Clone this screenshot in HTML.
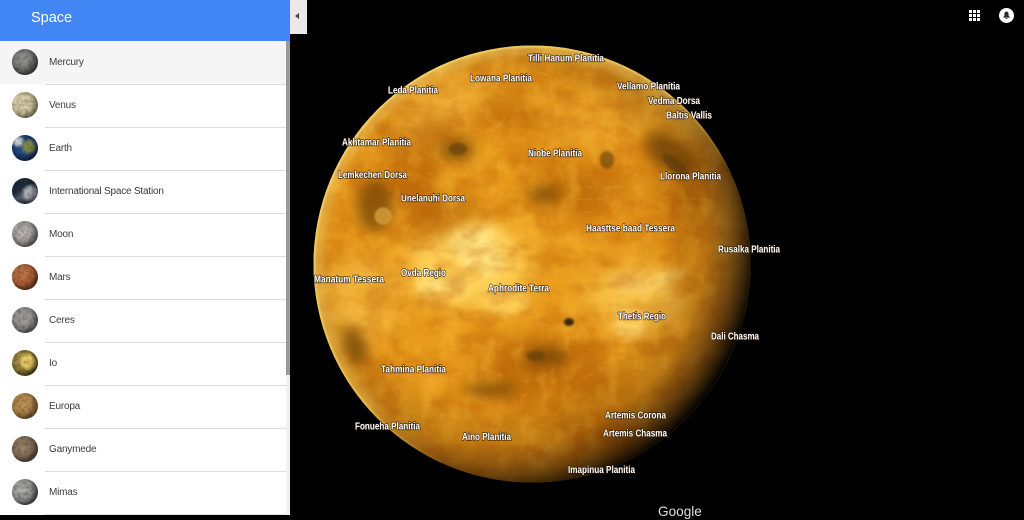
<!DOCTYPE html>
<html><head><meta charset="utf-8"><style>
html,body{margin:0;padding:0;width:1024px;height:515px;overflow:hidden;background:#000;font-family:"Liberation Sans",sans-serif}
#map{position:absolute;left:0;top:0}
#side{position:absolute;left:0;top:0;width:290px;height:515px;background:#fff;overflow:hidden}
#hd{position:absolute;left:0;top:0;width:290px;height:41px;background:#4285f4;color:#fff;font-size:14.5px;line-height:36px;text-indent:31px}
.r{position:absolute;left:0;width:286px;height:43px}
.r b{position:absolute;left:45px;right:0;bottom:-1px;height:1px;background:#dcdcdc}
.r span{position:absolute;left:49px;top:0;line-height:43px;font-size:10px;color:#3c3c3c;letter-spacing:-.2px;white-space:nowrap}
.r i{position:absolute;left:11.5px;top:8px;width:26px;height:26px;border-radius:50%;display:block;box-shadow:inset -3px -3px 5px rgba(0,0,0,.45)}
#av{position:absolute;left:0;top:0}
#track{position:absolute;left:286px;top:41px;width:4px;height:474px;background:#f1f1f1}
#thumb{position:absolute;left:286px;top:41px;width:4px;height:334px;background:#9a9a9a}
#tg{position:absolute;left:290px;top:0;width:17px;height:34px;background:#e9e9e9}
#tg:after{content:"";position:absolute;left:5px;top:13px;border:3.5px solid transparent;border-right:4px solid #444;border-left:0}
#goog{position:absolute;left:658px;top:502.5px;font-size:13.6px;line-height:17px;color:#ddd}
</style></head><body>
<svg id="map" width="1024" height="515" viewBox="0 0 1024 515">
<defs>
<radialGradient id="base" gradientUnits="userSpaceOnUse" cx="490" cy="270" r="250">
<stop offset="0" stop-color="#f0a722"/><stop offset=".55" stop-color="#e3951a"/><stop offset=".85" stop-color="#da8e1a"/><stop offset="1" stop-color="#e6a832"/>
</radialGradient>
<radialGradient id="shade" gradientUnits="userSpaceOnUse" cx="497" cy="238" r="268">
<stop offset=".62" stop-color="#000" stop-opacity="0"/><stop offset=".78" stop-color="#2a1000" stop-opacity=".18"/><stop offset=".88" stop-color="#1a0800" stop-opacity=".55"/><stop offset=".97" stop-color="#000" stop-opacity=".96"/><stop offset="1" stop-color="#000"/>
</radialGradient>
<linearGradient id="rim" gradientUnits="userSpaceOnUse" x1="340" y1="110" x2="660" y2="420">
<stop offset="0" stop-color="#ffe888"/><stop offset=".5" stop-color="#f6d060"/><stop offset=".72" stop-color="#f0b848" stop-opacity="0"/>
</linearGradient>
<clipPath id="disc"><circle cx="532" cy="264" r="218.5"/></clipPath>
<clipPath id="avc"><circle cx="24.500" cy="62" r="13"/><circle cx="24.500" cy="105" r="13"/><circle cx="24.500" cy="148" r="13"/><circle cx="24.500" cy="191" r="13"/><circle cx="24.500" cy="234" r="13"/><circle cx="24.500" cy="277" r="13"/><circle cx="24.500" cy="320" r="13"/><circle cx="24.500" cy="363" r="13"/><circle cx="24.500" cy="406" r="13"/><circle cx="24.500" cy="449" r="13"/><circle cx="24.500" cy="492" r="13"/></clipPath>
<filter id="b3" x="-50%" y="-50%" width="200%" height="200%" color-interpolation-filters="sRGB"><feGaussianBlur stdDeviation="5"/></filter>
<filter id="b6" x="-50%" y="-50%" width="200%" height="200%" color-interpolation-filters="sRGB"><feGaussianBlur stdDeviation="6"/></filter>
<filter id="b12" x="-50%" y="-50%" width="200%" height="200%" color-interpolation-filters="sRGB"><feGaussianBlur stdDeviation="12"/></filter>
<filter id="b1" x="-50%" y="-50%" width="200%" height="200%" color-interpolation-filters="sRGB"><feGaussianBlur stdDeviation="1"/></filter>
<filter id="noise" x="0" y="0" width="100%" height="100%" color-interpolation-filters="sRGB">
<feTurbulence type="fractalNoise" baseFrequency=".03 .045" numOctaves="5" seed="11"/>
<feColorMatrix values="0 0 0 0 .74  0 0 0 0 .38  0 0 0 0 .02  2.4 1.4 0 0 -1.55"/>
</filter>
<filter id="noise2" x="0" y="0" width="100%" height="100%" color-interpolation-filters="sRGB">
<feTurbulence type="fractalNoise" baseFrequency=".05 .035" numOctaves="5" seed="5"/>
<feColorMatrix values="0 0 0 0 1  0 0 0 0 .76  0 0 0 0 .22  0 2.6 1.4 0 -1.85"/>
</filter>
<filter id="veins" x="0" y="0" width="100%" height="100%" color-interpolation-filters="sRGB">
<feTurbulence type="turbulence" baseFrequency=".022 .04" numOctaves="4" seed="23"/>
<feColorMatrix values="0 0 0 0 1  0 0 0 0 .78  0 0 0 0 .3  -7 0 0 0 1"/>
</filter>
<filter id="avn" x="0" y="0" width="100%" height="100%" color-interpolation-filters="sRGB">
<feTurbulence type="fractalNoise" baseFrequency=".28" numOctaves="3" seed="3"/>
<feColorMatrix values="0 0 0 0 .12  0 0 0 0 .1  0 0 0 0 .08  2.6 1.6 0 0 -1.75"/>
</filter>
</defs>
<rect width="1024" height="515" fill="#000"/>
<g clip-path="url(#disc)">
<rect x="300" y="30" width="470" height="470" fill="url(#base)"/>
<g filter="url(#b12)">
<ellipse cx="440" cy="110" rx="50" ry="28" fill="#efb038" transform="rotate(-30 440 110)"/>
<ellipse cx="590" cy="120" rx="50" ry="24" fill="#e8a22a"/>
<ellipse cx="360" cy="300" rx="38" ry="42" fill="#f0b33c"/>
<ellipse cx="468" cy="265" rx="62" ry="42" fill="#fdd058"/>
<ellipse cx="635" cy="298" rx="50" ry="32" fill="#f5c048"/>
</g>
<g filter="url(#b12)" fill="#ac5a04" opacity=".65">
<ellipse cx="545" cy="370" rx="70" ry="34"/>
<ellipse cx="440" cy="215" rx="40" ry="22"/>
<ellipse cx="575" cy="190" rx="50" ry="22"/>
<ellipse cx="420" cy="135" rx="44" ry="16"/>
<ellipse cx="690" cy="190" rx="30" ry="40"/>
<ellipse cx="510" cy="115" rx="34" ry="12"/>
<ellipse cx="410" cy="180" rx="30" ry="24"/>
<ellipse cx="600" cy="430" rx="50" ry="16"/>
</g>
<g filter="url(#b3)">
<ellipse cx="478" cy="250" rx="30" ry="26" fill="#ffe27e" transform="rotate(25 478 250)"/>
<ellipse cx="443" cy="285" rx="30" ry="14" fill="#ffde74"/>
<ellipse cx="505" cy="302" rx="24" ry="13" fill="#fcd262"/>
<ellipse cx="640" cy="282" rx="28" ry="9" fill="#fad470"/>
<ellipse cx="628" cy="325" rx="15" ry="14" fill="#fbd774"/>
<ellipse cx="672" cy="275" rx="14" ry="6" fill="#f6ca64"/>
</g>
<rect x="300" y="30" width="470" height="470" filter="url(#noise)" opacity=".4"/>
<rect x="300" y="30" width="470" height="470" filter="url(#noise2)" opacity=".35"/>
<rect x="300" y="30" width="470" height="470" filter="url(#veins)" opacity=".22"/>
<g filter="url(#b6)" fill="#7a4808" opacity=".8">
<ellipse cx="375" cy="205" rx="18" ry="26"/>
<ellipse cx="457" cy="150" rx="18" ry="11"/>
<ellipse cx="355" cy="345" rx="11" ry="20" transform="rotate(-20 355 345)"/>
<ellipse cx="672" cy="155" rx="30" ry="16" transform="rotate(35 672 155)"/>
<ellipse cx="545" cy="357" rx="22" ry="11"/>
<ellipse cx="545" cy="195" rx="16" ry="8"/>
<ellipse cx="490" cy="390" rx="28" ry="7"/>
</g>
<g filter="url(#b1)" fill="#5c3c0c" opacity=".55">
<ellipse cx="607" cy="160" rx="7" ry="9"/>
<ellipse cx="458" cy="149" rx="9" ry="6"/>
<ellipse cx="536" cy="356" rx="9" ry="5"/>
<ellipse cx="675" cy="165" rx="16" ry="6" transform="rotate(40 675 165)"/>
</g>
<ellipse cx="569" cy="322" rx="5" ry="4" fill="#3c2a08" filter="url(#b1)"/>
<circle cx="383" cy="216" r="7.500" fill="#c8902f" filter="url(#b1)"/>
<circle cx="383" cy="216" r="7.500" fill="none" stroke="#e0ae50" stroke-width="1.200" filter="url(#b1)"/>
<rect x="300" y="30" width="470" height="470" fill="url(#shade)"/>
<circle cx="532" cy="264" r="215" fill="none" stroke="url(#rim)" stroke-width="8" filter="url(#b3)" opacity=".6"/>
<circle cx="532" cy="264" r="218" fill="none" stroke="url(#rim)" stroke-width="2.200" filter="url(#b1)"/>
</g>
<g font-family="'Liberation Sans',sans-serif" font-size="10" font-weight="700" fill="#fff" stroke="#241404" stroke-opacity=".8" stroke-width="1.500" paint-order="stroke" stroke-linejoin="round">
<text lengthAdjust="spacingAndGlyphs" x="528" y="61.500" textLength="76">Tilli Hanum Planitia</text>
<text lengthAdjust="spacingAndGlyphs" x="470" y="81.500" textLength="62">Lowana Planitia</text>
<text lengthAdjust="spacingAndGlyphs" x="388" y="93.500" textLength="50">Leda Planitia</text>
<text lengthAdjust="spacingAndGlyphs" x="617" y="89.500" textLength="63">Vellamo Planitia</text>
<text lengthAdjust="spacingAndGlyphs" x="648" y="104" textLength="52">Vedma Dorsa</text>
<text lengthAdjust="spacingAndGlyphs" x="666" y="118.500" textLength="46">Baltis Vallis</text>
<text lengthAdjust="spacingAndGlyphs" x="342" y="145.500" textLength="69">Akhtamar Planitia</text>
<text lengthAdjust="spacingAndGlyphs" x="528" y="156.500" textLength="54">Niobe Planitia</text>
<text lengthAdjust="spacingAndGlyphs" x="338" y="178" textLength="69">Lemkechen Dorsa</text>
<text lengthAdjust="spacingAndGlyphs" x="660" y="179.500" textLength="61">Llorona Planitia</text>
<text lengthAdjust="spacingAndGlyphs" x="401" y="201.500" textLength="64">Unelanuhi Dorsa</text>
<text lengthAdjust="spacingAndGlyphs" x="586" y="231.500" textLength="89">Haasttse baad Tessera</text>
<text lengthAdjust="spacingAndGlyphs" x="718" y="252.500" textLength="62">Rusalka Planitia</text>
<text lengthAdjust="spacingAndGlyphs" x="401" y="276" textLength="45">Ovda Regio</text>
<text lengthAdjust="spacingAndGlyphs" x="314" y="282.500" textLength="70">Manatum Tessera</text>
<text lengthAdjust="spacingAndGlyphs" x="488" y="291.500" textLength="61">Aphrodite Terra</text>
<text lengthAdjust="spacingAndGlyphs" x="618" y="319.500" textLength="48">Thetis Regio</text>
<text lengthAdjust="spacingAndGlyphs" x="711" y="339.500" textLength="48">Dali Chasma</text>
<text lengthAdjust="spacingAndGlyphs" x="381" y="372.500" textLength="65">Tahmina Planitia</text>
<text lengthAdjust="spacingAndGlyphs" x="605" y="418.500" textLength="61">Artemis Corona</text>
<text lengthAdjust="spacingAndGlyphs" x="355" y="429.500" textLength="65">Fonueha Planitia</text>
<text lengthAdjust="spacingAndGlyphs" x="603" y="436.500" textLength="64">Artemis Chasma</text>
<text lengthAdjust="spacingAndGlyphs" x="462" y="440" textLength="49">Aino Planitia</text>
<text lengthAdjust="spacingAndGlyphs" x="568" y="473" textLength="67">Imapinua Planitia</text>
</g>
<g fill="#fff">
<rect x="969" y="10" width="3" height="3"/><rect x="973" y="10" width="3" height="3"/><rect x="977" y="10" width="3" height="3"/>
<rect x="969" y="14" width="3" height="3"/><rect x="973" y="14" width="3" height="3"/><rect x="977" y="14" width="3" height="3"/>
<rect x="969" y="18" width="3" height="3"/><rect x="973" y="18" width="3" height="3"/><rect x="977" y="18" width="3" height="3"/>
<circle cx="1006.500" cy="15.500" r="7.500"/>
</g>
<path d="M1006.500 11.500c-1.400 0-2.100 1.100-2.100 2.500v1.700l-1.100 1.300v.6h6.400v-.6l-1.100-1.300V14c0-1.400-.7-2.500-2.100-2.500zM1005.600 18.100h1.800v.9h-1.800z" fill="#2a2a2a"/>
</svg>
<div id="goog">Google</div>
<div id="side">
<div class="r" style="top:41px;background:#f5f5f5;height:43px"><i style="background:radial-gradient(circle at 42% 38%,#9a9a9a,#6a6a6a 60%,#2c2c2c)"></i><span>Mercury</span><b></b></div>
<div class="r" style="top:84px"><i style="background:radial-gradient(circle at 42% 42%,#e4d8b8,#cfc29b 60%,#7c7660)"></i><span>Venus</span><b></b></div>
<div class="r" style="top:127px"><i style="background:radial-gradient(circle at 65% 45%,#7d8a4a 0 22%,transparent 40%),radial-gradient(circle at 25% 25%,#c8d0d8 0 10%,transparent 25%),radial-gradient(circle at 45% 45%,#2c5a9a,#183a70 65%,#0a1630)"></i><span>Earth</span><b></b></div>
<div class="r" style="top:170px"><i style="background:radial-gradient(circle at 70% 60%,#a8aeb4 0 22%,transparent 42%),linear-gradient(150deg,#1c2a3a 40%,#5b6570 60%,#262d36)"></i><span>International Space Station</span><b></b></div>
<div class="r" style="top:213px"><i style="background:radial-gradient(circle at 42% 42%,#c4bebb,#979190 62%,#5e5a5a)"></i><span>Moon</span><b></b></div>
<div class="r" style="top:256px"><i style="background:radial-gradient(circle at 42% 38%,#c67a4c,#a55a32 60%,#4a2412)"></i><span>Mars</span><b></b></div>
<div class="r" style="top:299px"><i style="background:radial-gradient(circle at 45% 42%,#a9a5a4,#8b8787 65%,#6f6c6c)"></i><span>Ceres</span><b></b></div>
<div class="r" style="top:342px"><i style="background:radial-gradient(circle at 62% 45%,#e8c864 0 25%,transparent 45%),radial-gradient(circle at 42% 42%,#bfa656,#7f6e2c 62%,#2e2810)"></i><span>Io</span><b></b></div>
<div class="r" style="top:385px"><i style="background:radial-gradient(circle at 45% 38%,#c49a5c,#a87c44 60%,#8a8468)"></i><span>Europa</span><b></b></div>
<div class="r" style="top:428px"><i style="background:radial-gradient(circle at 45% 45%,#a08a6c,#7a6450 62%,#5c5054)"></i><span>Ganymede</span><b></b></div>
<div class="r" style="top:471px"><i style="background:radial-gradient(circle at 38% 40%,#b6b6b6,#8c8c8c 55%,#262626)"></i><span>Mimas</span><b></b></div>
<svg id="av" width="50" height="515"><g clip-path="url(#avc)"><rect width="50" height="515" filter="url(#avn)" opacity=".25"/></g></svg>
<div id="track"></div><div id="thumb"></div>
<div id="hd">Space</div>
</div>
<div id="tg"></div>
</body></html>
